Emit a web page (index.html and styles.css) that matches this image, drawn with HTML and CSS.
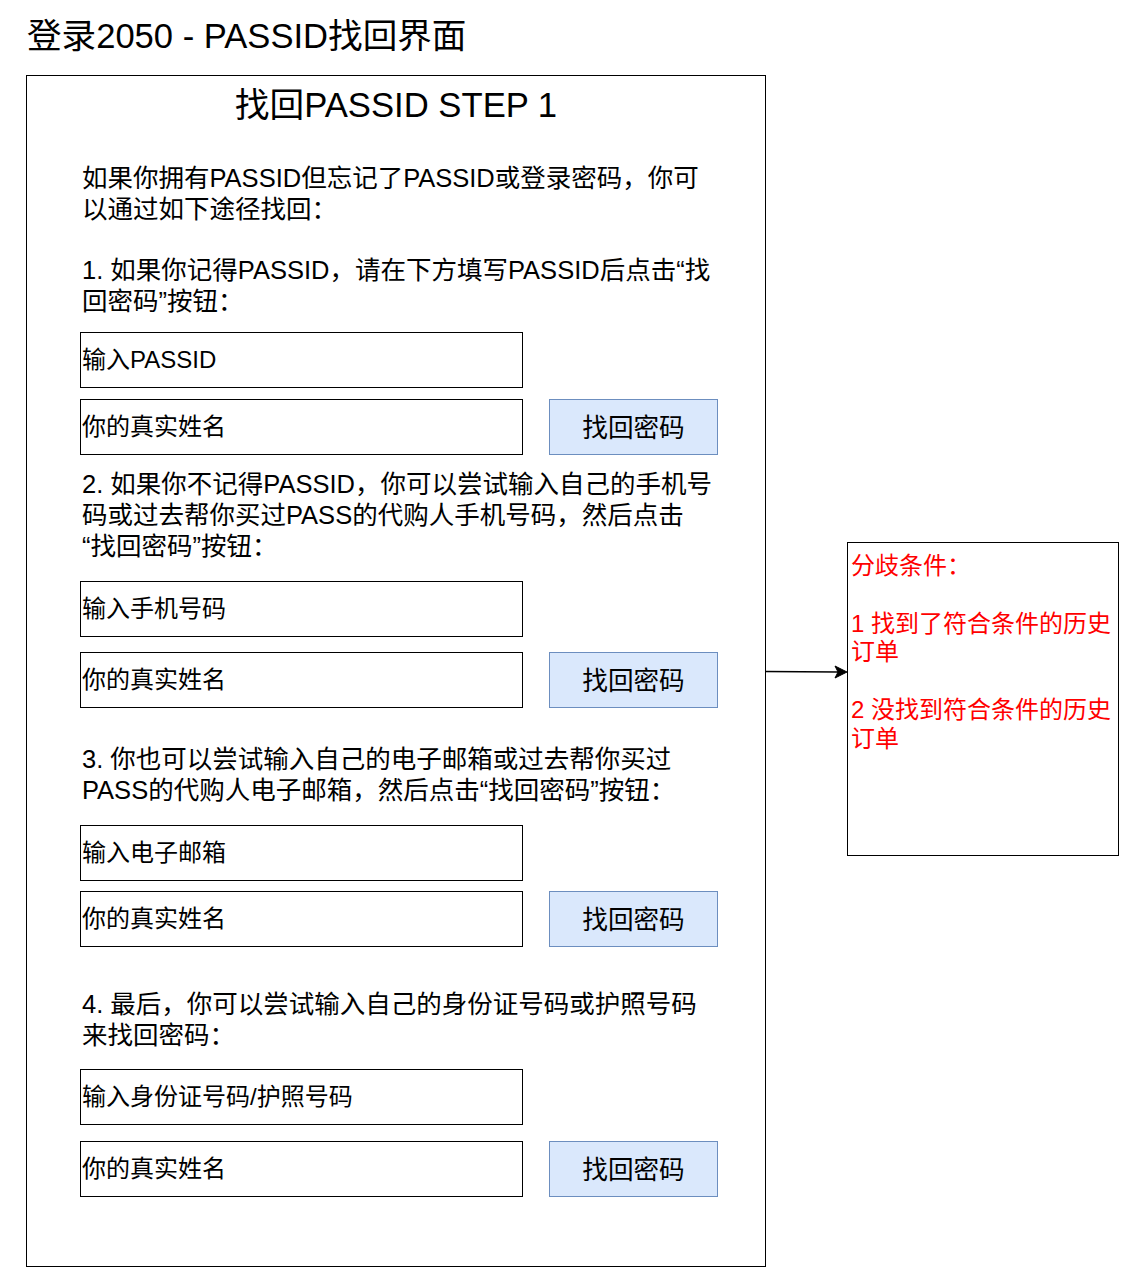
FILE: index.html
```html
<!DOCTYPE html>
<html lang="zh-CN">
<head>
<meta charset="utf-8">
<title>登录2050 - PASSID找回界面</title>
<link rel="stylesheet" href="styles.css">
</head>
<body>
<div class="page">
  <h1 class="title">登录2050 - PASSID找回界面</h1>
  <div class="canvas">
    <section class="frame">
      <h2 class="frame-title">找回PASSID STEP 1</h2>
      <p class="text intro">如果你拥有PASSID但忘记了PASSID或登录密码，你可<br>以通过如下途径找回：</p>

      <p class="text s1">1. 如果你记得PASSID，请在下方填写PASSID后点击“找<br>回密码”按钮：</p>
      <div class="field f1">输入PASSID</div>
      <div class="row r1"><div class="field">你的真实姓名</div><div class="btn">找回密码</div></div>

      <p class="text s2">2. 如果你不记得PASSID，你可以尝试输入自己的手机号<br>码或过去帮你买过PASS的代购人手机号码，然后点击<br>“找回密码”按钮：</p>
      <div class="field f2">输入手机号码</div>
      <div class="row r2"><div class="field">你的真实姓名</div><div class="btn">找回密码</div></div>

      <p class="text s3">3. 你也可以尝试输入自己的电子邮箱或过去帮你买过<br>PASS的代购人电子邮箱，然后点击“找回密码”按钮：</p>
      <div class="field f3">输入电子邮箱</div>
      <div class="row r3"><div class="field">你的真实姓名</div><div class="btn">找回密码</div></div>

      <p class="text s4">4. 最后，你可以尝试输入自己的身份证号码或护照号码<br>来找回密码：</p>
      <div class="field f4">输入身份证号码/护照号码</div>
      <div class="row r4"><div class="field">你的真实姓名</div><div class="btn">找回密码</div></div>
    </section>

    <svg class="arrow" width="84" height="14" viewBox="0 0 84 14" aria-hidden="true">
      <path d="M0 6.5 L73 7" stroke="#000" stroke-width="1.3" fill="none"/>
      <path d="M82 7 L70 1 L73 7 L70 13 Z" fill="#000" stroke="#000" stroke-width="1" stroke-linejoin="miter"/>
    </svg>

    <aside class="note">分歧条件：<br><br>1 找到了符合条件的历史<br>订单<br><br>2 没找到符合条件的历史<br>订单</aside>
  </div>
</div>
</body>
</html>
```

FILE: styles.css
```css
* {
  box-sizing: border-box;
}

html, body {
  margin: 0;
  padding: 0;
  background: #fff;
}

body {
  font-family: "Liberation Sans", "Noto Sans CJK SC", sans-serif;
  color: #000;
}

.page {
  padding-top: 16px;
  width: 1127px;
  height: 1285px;
  overflow: hidden;
}

.title {
  margin: 0 0 19px 0;
  padding-left: 27px;
  font-size: 34.6px;
  line-height: 40px;
  height: 40px;
  font-weight: normal;
  white-space: nowrap;
}

.canvas {
  position: relative;
  display: flex;
  align-items: flex-start;
  padding-left: 26px;
}

.frame {
  width: 740px;
  height: 1192px;
  border: 1px solid #000;
  padding-left: 53px;
  display: flex;
  flex-direction: column;
  align-items: flex-start;
}

.frame-title {
  align-self: stretch;
  margin: 9px 0 0 -53px;
  font-size: 34.67px;
  line-height: 40px;
  height: 40px;
  font-weight: normal;
  text-align: center;
  white-space: nowrap;
}

.text {
  margin: 0;
  padding: 1px 0 0 2px;
  font-size: 25.5px;
  line-height: 31px;
  white-space: nowrap;
}

.intro { margin-top: 37px; }
.s1 { margin-top: 29px; }
.s2 { margin-top: 13px; }
.s3 { margin-top: 35px; }
.s4 { margin-top: 41px; }

.field {
  width: 443px;
  height: 56px;
  border: 1px solid #000;
  padding: 0 0 5px 1px;
  display: flex;
  align-items: center;
  font-size: 24px;
  white-space: nowrap;
  background: #fff;
}

.f1 { margin-top: 15px; }
.f2 { margin-top: 19px; }
.f3 { margin-top: 19px; }
.f4 { margin-top: 18px; }

.row {
  display: flex;
  align-items: flex-start;
  gap: 26px;
}

.r1 { margin-top: 11px; }
.r2 { margin-top: 15px; }
.r3 { margin-top: 10px; }
.r4 { margin-top: 16px; }

.btn {
  width: 169px;
  height: 56px;
  border: 1px solid #6c8ebf;
  background: #dae8fc;
  display: flex;
  align-items: center;
  justify-content: center;
  padding-bottom: 4px;
  font-size: 25.6px;
  white-space: nowrap;
}

.arrow {
  position: absolute;
  left: 765px;
  top: 590px;
  overflow: visible;
}

.note {
  margin-left: 81px;
  margin-top: 467px;
  width: 272px;
  height: 314px;
  border: 1px solid #000;
  padding: 9px 0 0 3px;
  color: #ff0000;
  font-size: 24px;
  line-height: 28.8px;
  white-space: nowrap;
}
```
